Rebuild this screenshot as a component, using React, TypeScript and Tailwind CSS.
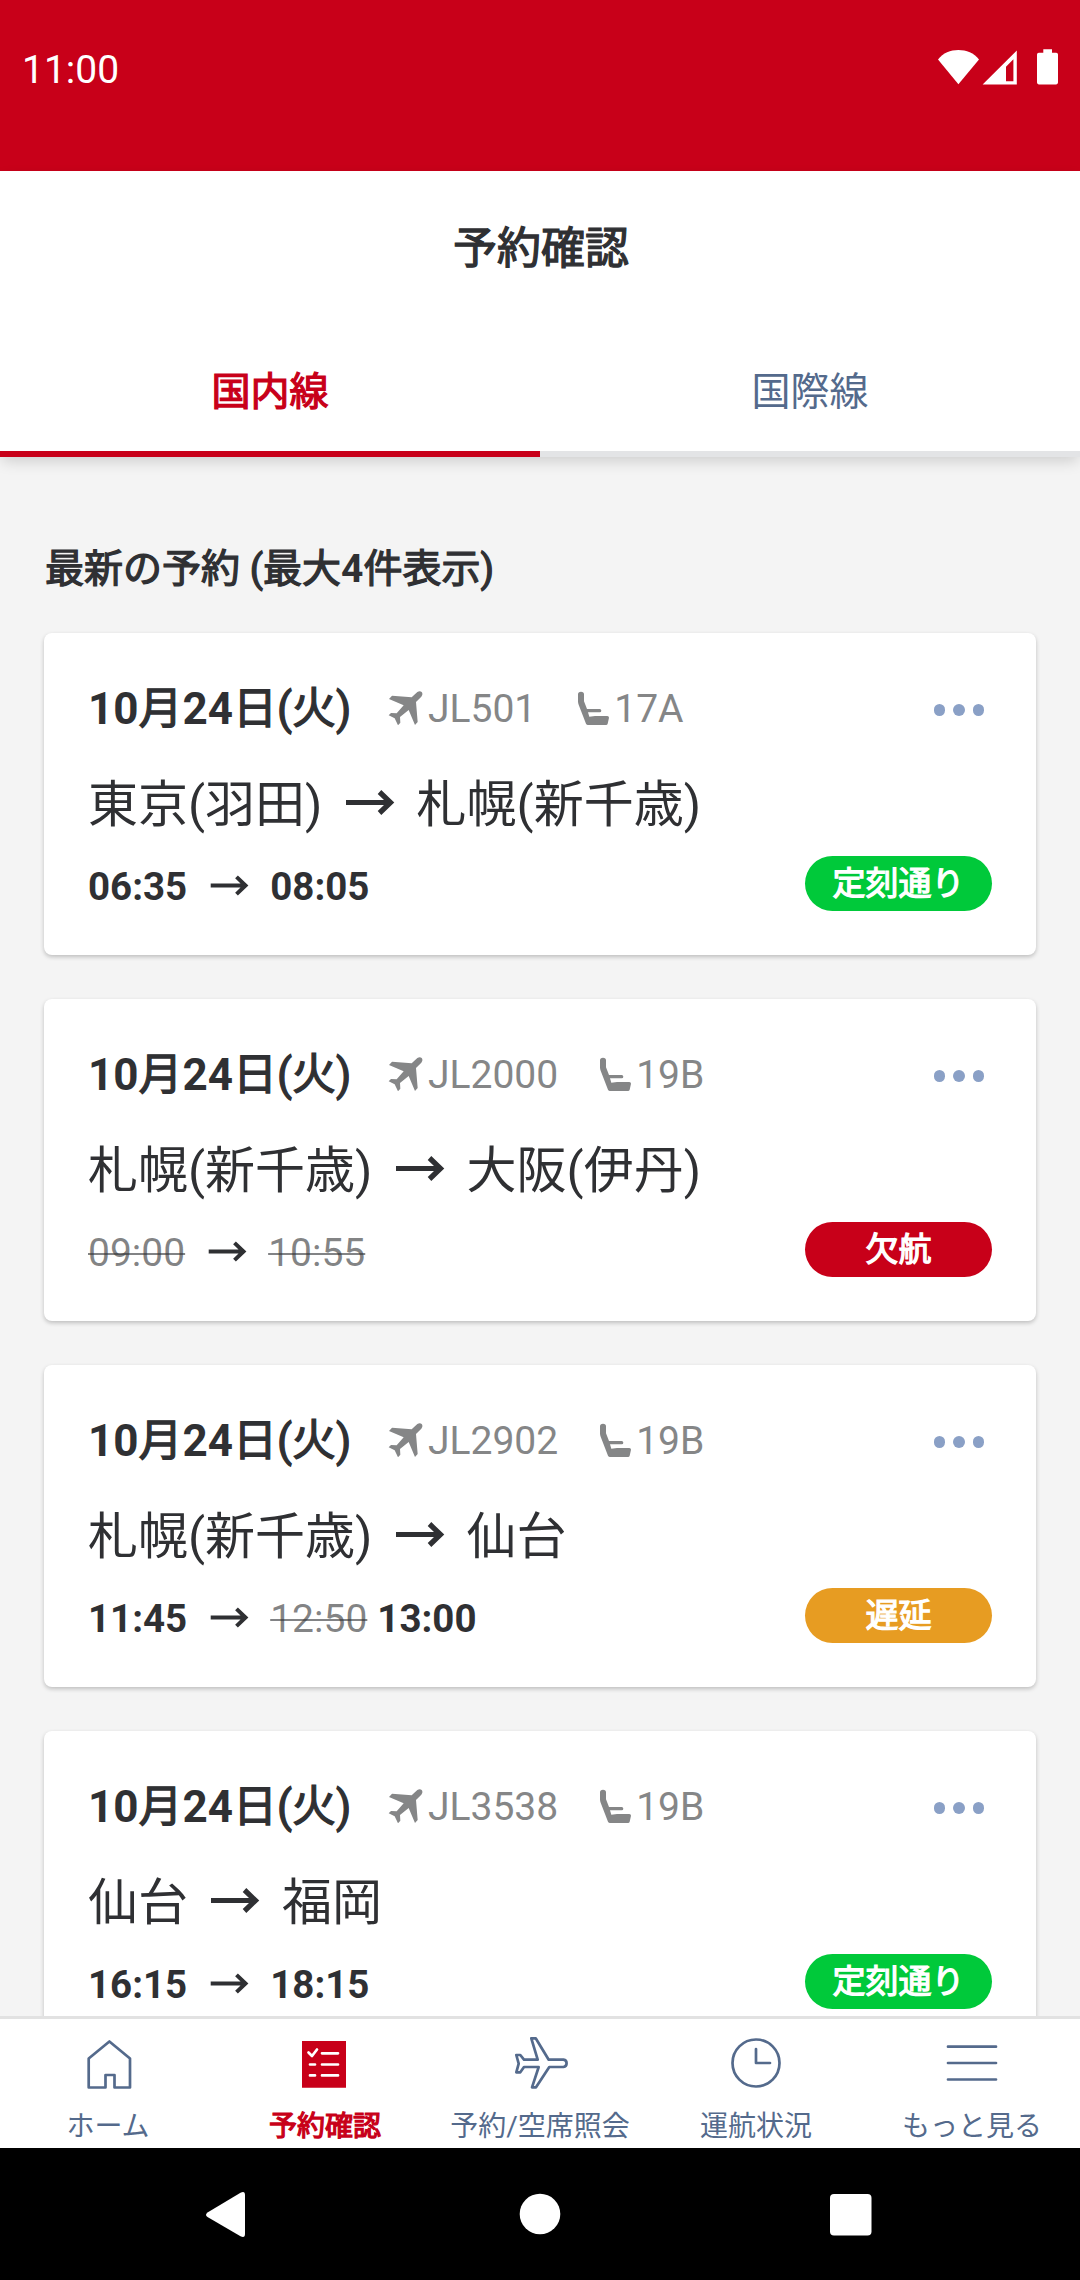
import { ReactNode } from 'react';
import clsx from 'clsx';

// ==========================================
// TYPES
// ==========================================
type Status = 'ontime' | 'cancelled' | 'delayed';

interface Time {
  text: string;
  old?: boolean;
}

interface Reservation {
  flight: string;
  seat: string;
  from: string;
  to: string;
  departure: Time[];
  arrival: Time[];
  status: Status;
}

// ==========================================
// DATA
// ==========================================
const reservations: Reservation[] = [
  {
    flight: 'JL501',
    seat: '17A',
    from: '東京(羽田)',
    to: '札幌(新千歳)',
    departure: [{ text: '06:35' }],
    arrival: [{ text: '08:05' }],
    status: 'ontime',
  },
  {
    flight: 'JL2000',
    seat: '19B',
    from: '札幌(新千歳)',
    to: '大阪(伊丹)',
    departure: [{ text: '09:00', old: true }],
    arrival: [{ text: '10:55', old: true }],
    status: 'cancelled',
  },
  {
    flight: 'JL2902',
    seat: '19B',
    from: '札幌(新千歳)',
    to: '仙台',
    departure: [{ text: '11:45' }],
    arrival: [{ text: '12:50', old: true }, { text: '13:00' }],
    status: 'delayed',
  },
  {
    flight: 'JL3538',
    seat: '19B',
    from: '仙台',
    to: '福岡',
    departure: [{ text: '16:15' }],
    arrival: [{ text: '18:15' }],
    status: 'ontime',
  },
];

const statusLabel: Record<Status, string> = {
  ontime: '定刻通り',
  cancelled: '欠航',
  delayed: '遅延',
};

const statusColor: Record<Status, string> = {
  ontime: 'bg-[#00c93a]',
  cancelled: 'bg-[#c80019]',
  delayed: 'bg-[#e79c22]',
};

// ==========================================
// ICONS
// ==========================================
const StatusIcons = () => (
  <svg width="130" height="60" viewBox="0 0 130 60" fill="#fff">
    <path d="M8 19.5C13 13 20.500 10.100 28.400 10.100S44 13 49 19.500L28.400 44.300Z" />
    <path fillRule="evenodd" d="M52.600 44.500L86.800 10.400V44.500ZM76 26.700V41.300H83.400V19.200Z" />
    <path d="M113.300 9.300H122V12.700H126.200Q128 12.700 128 14.500V42.600Q128 44.400 126.200 44.400H108.800Q107 44.400 107 42.600V14.500Q107 12.700 108.800 12.700H113.300Z" />
  </svg>
);

const PlaneIcon = () => (
  <svg className="mb-[2px]" width="36" height="36" viewBox="24 26 108 108" fill="#858687">
    <path d="M112 32Q120 27 125 32Q130 38 124 46L108 62L113 122L105 131L86 86L60 107L61 124L54 132L44 111L26 102L33 95L50 96L71 72L27 53L36 43L95 48Z" />
  </svg>
);

const SeatIcon = () => (
  <svg className="mb-[2px]" width="31" height="36" viewBox="24 26 93 108" fill="#858687">
    <path d="M24 39Q24 31 33 31Q42 31 42 39V60L51 83H89Q94 83 94 88Q94 93 89 93H54L58 106L75 104H112Q117 104 117 109L113 127Q112 131 108 131H54Q50 131 48 127L26 70Q24 66 24 60Z" />
  </svg>
);

const BigArrow = () => (
  <svg width="94" height="72" viewBox="0 0 94 72" fill="none" stroke="#2f3033" strokeWidth="5.200">
    <path d="M23 33.500H67M56.500 23L67.500 33.500L56.500 44" />
  </svg>
);

const SmallArrow = () => (
  <svg width="83" height="55" viewBox="0 0 83 55" fill="none" stroke="#2f3033" strokeWidth="4">
    <path d="M23.700 29.500H58M49.500 20.900L58.500 29.500L49.500 38.100" />
  </svg>
);

const NavIcon = ({ children }: { children: ReactNode }) => (
  <svg
    width="60"
    height="60"
    viewBox="0 0 60 60"
    fill="none"
    stroke="#546a8c"
    strokeWidth="2.700"
    strokeLinejoin="round"
    strokeLinecap="round"
  >
    {children}
  </svg>
);

const navItems = [
  {
    label: 'ホーム',
    icon: (
      <path d="M31.400 8.500L52 25.500V54.500H36.500V42H27.500V54.500H10.700V25.500Z" />
    ),
  },
  {
    label: '予約確認',
    active: true,
    icon: (
      <>
        <path d="M8 8H52V54.700H8Z" fill="#c80019" stroke="none" />
        <path stroke="#fff" d="M14.500 19.500L18 23L23 16.500M28 20.300H44M16 31.500H21M28 31.500H44M16 42.400H21M28 42.400H44" />
      </>
    ),
  },
  {
    label: '予約/空席照会',
    icon: (
      <path d="M21.300 5.300H25.700L38.700 26.700H53.500A3.700 3.700 0 0 1 53.500 34H39.300L26 54.300H22L28.700 34H14L10.300 39.300H6.300L8.700 30.600L6.300 22H10.300L14 26.700H27.700Z" />
    ),
  },
  {
    label: '運航状況',
    icon: (
      <>
        <circle cx="30" cy="30" r="23.500" />
        <path d="M30 16V30H44" />
      </>
    ),
  },
  {
    label: 'もっと見る',
    icon: <path d="M6 13.700H54M6 30H54M6 46.500H54" />,
  },
];

// Japanese glyphs get an emboldened regular weight, digits keep the real bold
const Bold = ({ children }: { children: string }) => (
  <>
    {children.split(/([0-9]+)/).map((part, i) => (
      <span key={i} className={i % 2 ? 'font-bold' : 'font-normal [-webkit-text-stroke:1.25px_currentColor]'}>
        {part}
      </span>
    ))}
  </>
);

const Times = ({ times }: { times: Time[] }) => (
  <span className="flex gap-[10px] pt-[3px]">
    {times.map((t) => (
      <span
        key={t.text}
        className={
          t.old
            ? 'pt-px text-[39px] text-[#2f3033]/60 line-through decoration-2'
            : 'text-[38.5px] font-bold'
        }
      >
        {t.text}
      </span>
    ))}
  </span>
);

const Card = ({ item }: { item: Reservation }) => (
  <article className="h-[322px] shrink-0 rounded-lg bg-white px-[44px] pt-[46px] shadow-[0_2px_4px_rgba(0,0,0,0.22)]">
    <div className="flex h-[60px] items-center text-[39px] text-[#858687]">
      <h3 className="w-[300px] text-[44px] leading-[60px] text-[#2f3033]">
        <Bold>10月24日(火)</Bold>
      </h3>
      <PlaneIcon />
      <span className="ml-[4px]">{item.flight}</span>
      <span className="ml-[42px] flex items-center gap-[5px]">
        <SeatIcon />
        {item.seat}
      </span>
      <span className="mt-[2px] mr-[8px] ml-auto flex gap-[8px]">
        <i className="size-[11.500px] rounded-full bg-[#8aa0c6]" />
        <i className="size-[11.500px] rounded-full bg-[#8aa0c6]" />
        <i className="size-[11.500px] rounded-full bg-[#8aa0c6]" />
      </span>
    </div>
    <div className="mt-[30px] flex h-[72px] text-[50px] leading-[72px]">
      <span>{item.from}</span>
      <BigArrow />
      <span>{item.to}</span>
    </div>
    <div className="mt-[15px] flex h-[55px] leading-[55px]">
      <Times times={item.departure} />
      <SmallArrow />
      <Times times={item.arrival} />
      <span
        className={clsx(
          'ml-auto w-[187px] rounded-full text-center text-[33px] text-white',
          statusColor[item.status]
        )}
      >
        <Bold>{statusLabel[item.status]}</Bold>
      </span>
    </div>
  </article>
);

// ==========================================
// MAIN SCREEN
// ==========================================
export default function App() {
  return (
    <div className="flex h-[2280px] w-[1080px] flex-col overflow-hidden bg-[#f4f4f4] font-['Roboto','Noto_Sans_CJK_JP',sans-serif] text-[#2f3033]">
      {/* Status bar */}
      <header className="flex h-[171px] shrink-0 items-start justify-between bg-[#c80019] pt-[40px] pr-[20px] pl-[22px] text-white">
        <span className="text-[39px] leading-[60px]">11:00</span>
        <StatusIcons />
      </header>

      {/* Title and tabs */}
      <div className="relative z-10 shrink-0 bg-white shadow-[0_6px_14px_-2px_rgba(0,0,0,0.16)]">
        <h1 className="h-[156px] pl-[2px] text-center text-[44px] leading-[156px]">
          <Bold>予約確認</Bold>
        </h1>
        <div className="flex h-[130px] text-center text-[39px] leading-[131px]">
          <div className="flex-1 border-b-[6px] border-[#c80019] text-[#c80019]">
            <Bold>国内線</Bold>
          </div>
          <div className="flex-1 border-b-[6px] border-[#e3e4e6] text-[#546a8c]">国際線</div>
        </div>
      </div>

      {/* Reservation list */}
      <main className="flex min-h-0 flex-1 flex-col gap-[44px] overflow-hidden px-[44px] pt-[89px]">
        <h2 className="-mb-[3px] h-[46px] shrink-0 pl-px text-[39px] leading-[46px]">
          <Bold>最新の予約 (最大4件表示)</Bold>
        </h2>
        {reservations.map((item) => (
          <Card key={item.flight} item={item} />
        ))}
      </main>

      {/* Bottom tabs */}
      <nav className="grid h-[132px] shrink-0 grid-cols-5 border-t-[3px] border-[#e2e2e2] bg-white">
        {navItems.map((item) => (
          <div
            key={item.label}
            className={clsx(
              'flex flex-col items-center pt-[14px] text-[28px] leading-[34px] whitespace-nowrap',
              item.active ? 'text-[#c80019]' : 'text-[#546a8c]'
            )}
          >
            <NavIcon>{item.icon}</NavIcon>
            <span className={clsx('mt-[17px]', item.active && 'pl-[2px]')}>
              {item.active ? <Bold>{item.label}</Bold> : item.label}
            </span>
          </div>
        ))}
      </nav>

      {/* System navigation */}
      <footer className="flex h-[132px] shrink-0 justify-center bg-black">
        <svg width="1080" height="132" viewBox="0 0 1080 132" fill="#fff">
          <path d="M207.500 64.500L240.500 44.700Q245 42.500 245 47V86Q245 90.500 240.500 88.300L207.500 69Q204.500 66.800 207.500 64.500Z" />
          <circle cx="540" cy="66" r="20.300" />
          <rect x="830" y="46" width="41.500" height="41.500" rx="4" />
        </svg>
      </footer>
    </div>
  );
}
